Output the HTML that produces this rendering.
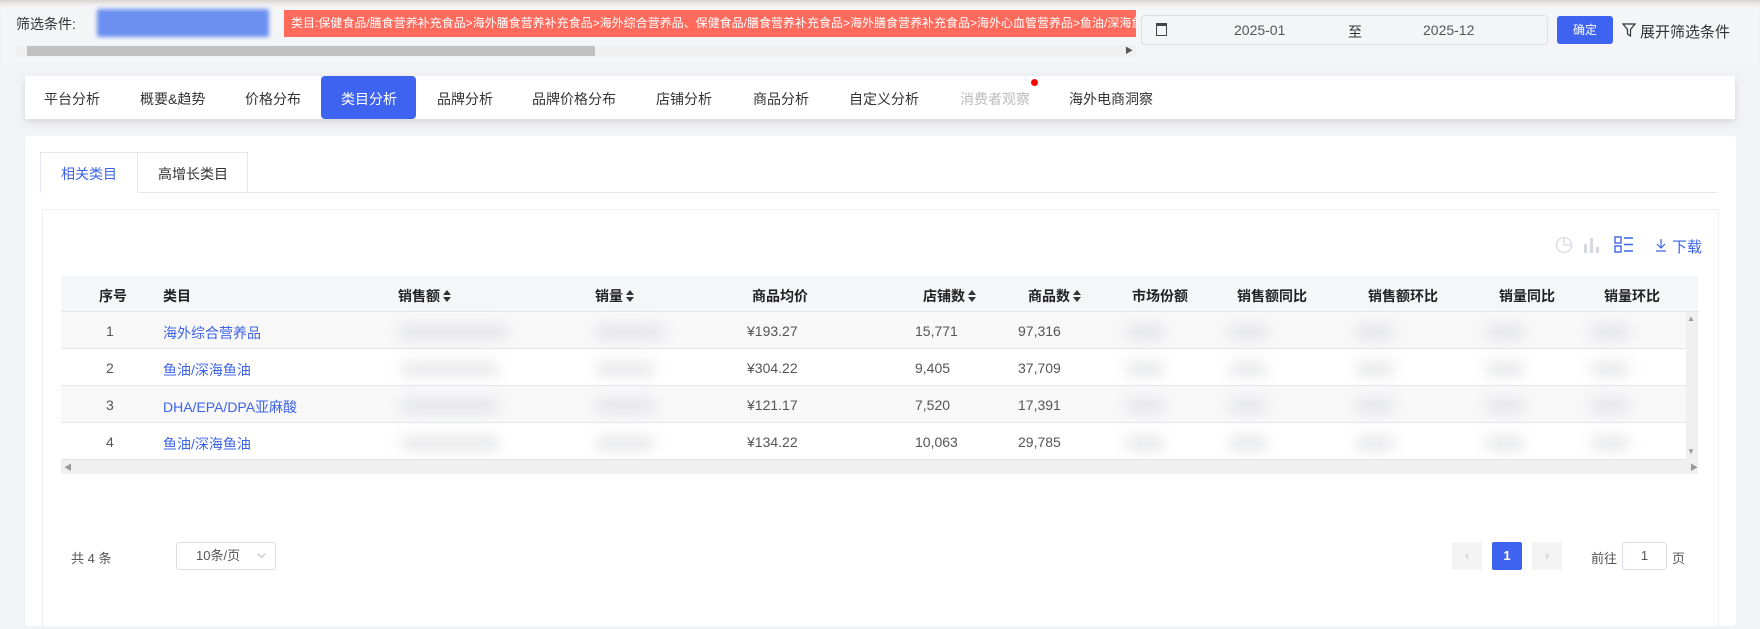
<!DOCTYPE html>
<html><head><meta charset="utf-8"><style>
*{box-sizing:border-box;margin:0;padding:0}
body{width:1760px;height:613px;overflow:hidden;background:#f2f3f6;font-family:"Liberation Sans","Noto Sans CJK SC",sans-serif;font-size:14px;color:#333;position:relative}
.a{position:absolute;white-space:nowrap}
.top{left:0;top:0;width:1760px;height:64px;background:#f4f5f7;box-shadow:inset 0 6px 6px -4px rgba(150,120,100,.35)}
.nav{left:25px;top:76px;width:1710px;height:43px;background:#fff;box-shadow:0 3px 8px rgba(0,0,0,.12)}
.nav span{position:absolute;top:13px;font-size:14px;color:#333}
.card{left:25px;top:136px;width:1711px;height:490px;background:#fff;border-radius:3px}
.th{top:286px;font-weight:bold;font-size:14px;color:#222}
.row{left:61px;width:1625px;height:37px;border-bottom:1px solid #e4e5e8}
.td{font-size:14px;color:#555}
.lk{color:#3d63e8}
.blur{position:absolute;height:14px;background:#d6d7da;filter:blur(7px);border-radius:7px;opacity:.6}
.sort{display:inline-block;position:relative;width:9px;height:14px;vertical-align:-2px;margin-left:2px}
.sort:before{content:"";position:absolute;left:1px;top:1px;border:4px solid transparent;border-bottom:5px solid #333;border-top:0}
.sort:after{content:"";position:absolute;left:1px;top:8px;border:4px solid transparent;border-top:5px solid #333;border-bottom:0}
</style></head><body>
<div class="a top"></div>
<div class="a" style="left:16px;top:14px;font-size:14px;color:#333">筛选条件:</div>
<div class="a" style="left:97px;top:9px;width:172px;height:28px;background:#6a8ff0;filter:blur(2px);border-radius:2px"></div>
<div class="a" style="left:284px;top:10px;width:852px;height:27px;background:#ff6a5c;color:#fff;font-size:12px;line-height:27px;padding-left:7px;overflow:hidden">类目:保健食品/膳食营养补充食品&gt;海外膳食营养补充食品&gt;海外综合营养品、保健食品/膳食营养补充食品&gt;海外膳食营养补充食品&gt;海外心血管营养品&gt;鱼油/深海鱼油</div>
<div class="a" style="left:16px;top:45px;width:1120px;height:12px;background:#f0f0f0"></div>
<div class="a" style="left:27px;top:46px;width:568px;height:10px;background:#c1c1c1"></div>
<div class="a" style="left:1125px;top:45px;font-size:8px;color:#555">▶</div>
<div class="a" style="left:1141px;top:15px;width:407px;height:30px;border:1px solid #dcdfe6;border-radius:4px;background:#f4f5f7"></div>
<div class="a" style="left:1156px;top:23px;width:11px;height:13px;border:1.5px solid #444;border-top-width:3px"></div>
<div class="a" style="left:1234px;top:22px;color:#555;font-size:14px">2025-01</div>
<div class="a" style="left:1348px;top:22px;color:#333;font-size:14px">至</div>
<div class="a" style="left:1423px;top:22px;color:#555;font-size:14px">2025-12</div>
<div class="a" style="left:1557px;top:16px;width:56px;height:28px;background:#3d63f0;border-radius:3px;color:#fff;font-size:12px;line-height:28px;text-align:center">确定</div>
<svg class="a" style="left:1622px;top:23px" width="14" height="14" viewBox="0 0 14 14"><path d="M1 1h12L8.5 6.5V13L5.5 11V6.5Z" fill="none" stroke="#333" stroke-width="1.2"/></svg>
<div class="a" style="left:1640px;top:21px;font-size:15px;color:#333">展开筛选条件</div>

<div class="a nav">
<span style="left:19px">平台分析</span><span style="left:115px">概要&amp;趋势</span><span style="left:220px">价格分布</span>
<div style="position:absolute;left:296px;top:0;width:95px;height:43px;background:#3d63f0;border-radius:4px"></div>
<span style="left:316px;color:#fff">类目分析</span><span style="left:412px">品牌分析</span><span style="left:507px">品牌价格分布</span>
<span style="left:631px">店铺分析</span><span style="left:728px">商品分析</span><span style="left:824px">自定义分析</span>
<span style="left:935px;color:#bbb">消费者观察</span><div style="position:absolute;left:1006px;top:3px;width:7px;height:7px;border-radius:50%;background:#f00"></div>
<span style="left:1044px">海外电商洞察</span>
</div>

<div class="a card"></div>
<div class="a" style="left:40px;top:152px;width:98px;height:41px;border:1px solid #e4e7ed;border-bottom:1px solid #fff;background:#fff;z-index:2"></div>
<div class="a" style="left:137px;top:152px;width:111px;height:40px;border:1px solid #e4e7ed;border-bottom:none"></div>
<div class="a" style="left:40px;top:192px;width:1677px;height:1px;background:#e4e7ed"></div>
<div class="a" style="left:61px;top:164px;color:#3d63e8;z-index:3">相关类目</div>
<div class="a" style="left:158px;top:164px;color:#333">高增长类目</div>
<div class="a" style="left:42px;top:209px;width:1677px;height:420px;border:1px solid #eef0f3"></div>

<svg class="a" style="left:1555px;top:236px" width="18" height="18" viewBox="0 0 18 18"><circle cx="9" cy="9" r="7.5" fill="none" stroke="#dde0e6" stroke-width="1.6"/><path d="M9 1.5V9H16.5" fill="none" stroke="#dde0e6" stroke-width="1.6"/></svg>
<svg class="a" style="left:1583px;top:236px" width="18" height="18" viewBox="0 0 18 18"><rect x="1" y="8" width="3" height="9" fill="#d5d8de"/><rect x="7" y="2" width="3" height="15" fill="#d5d8de"/><rect x="13" y="11" width="3" height="6" fill="#d5d8de"/></svg>
<svg class="a" style="left:1614px;top:236px" width="20" height="18" viewBox="0 0 20 18"><rect x="1" y="1" width="6" height="6" fill="none" stroke="#3d63e8" stroke-width="1.4"/><rect x="1" y="10" width="6" height="6" fill="none" stroke="#3d63e8" stroke-width="1.4"/><path d="M10 2h9M10 8.5h9M10 15h9" stroke="#3d63e8" stroke-width="1.4"/></svg>
<svg class="a" style="left:1655px;top:238px" width="12" height="14" viewBox="0 0 12 14"><path d="M6 1v9M2 6l4 4 4-4M1 13h10" fill="none" stroke="#3d63e8" stroke-width="1.2"/></svg>
<div class="a" style="left:1672px;top:236px;color:#3d63e8;font-size:15px">下载</div>

<div class="a" style="left:61px;top:276px;width:1637px;height:36px;background:#f5f6f8;border-bottom:1px solid #e4e5e8"></div>
<div class="a th" style="left:99px">序号</div>
<div class="a th" style="left:163px">类目</div>
<div class="a th" style="left:398px">销售额<span class="sort"></span></div>
<div class="a th" style="left:595px">销量<span class="sort"></span></div>
<div class="a th" style="left:752px">商品均价</div>
<div class="a th" style="left:923px">店铺数<span class="sort"></span></div>
<div class="a th" style="left:1028px">商品数<span class="sort"></span></div>
<div class="a th" style="left:1132px">市场份额</div>
<div class="a th" style="left:1237px">销售额同比</div>
<div class="a th" style="left:1368px">销售额环比</div>
<div class="a th" style="left:1499px">销量同比</div>
<div class="a th" style="left:1604px">销量环比</div>

<div class="a row" style="top:312px;background:#f8f8f9"></div>
<div class="a row" style="top:349px"></div>
<div class="a row" style="top:386px;background:#f8f8f9"></div>
<div class="a row" style="top:423px"></div>
<div class="a" style="left:1686px;top:312px;width:12px;height:148px;background:#f0f0f0"></div>
<div class="a" style="left:1687px;top:314px;font-size:8px;color:#999">▲</div>
<div class="a" style="left:1687px;top:447px;font-size:8px;color:#999">▼</div>
<div class="a" style="left:61px;top:460px;width:1637px;height:14px;background:#f0f0f0"></div>
<div class="a" style="left:64px;top:462px;font-size:8px;color:#999">◀</div>
<div class="a" style="left:1690px;top:462px;font-size:8px;color:#999">▶</div>

<div class="a td" style="left:106px;top:323px">1</div><div class="a td lk" style="left:163px;top:323px">海外综合营养品</div><div class="a td" style="left:747px;top:323px">¥193.27</div><div class="a td" style="left:915px;top:323px">15,771</div><div class="a td" style="left:1018px;top:323px">97,316</div>
<div class="a td" style="left:106px;top:360px">2</div><div class="a td lk" style="left:163px;top:360px">鱼油/深海鱼油</div><div class="a td" style="left:747px;top:360px">¥304.22</div><div class="a td" style="left:915px;top:360px">9,405</div><div class="a td" style="left:1018px;top:360px">37,709</div>
<div class="a td" style="left:106px;top:397px">3</div><div class="a td lk" style="left:163px;top:397px">DHA/EPA/DPA亚麻酸</div><div class="a td" style="left:747px;top:397px">¥121.17</div><div class="a td" style="left:915px;top:397px">7,520</div><div class="a td" style="left:1018px;top:397px">17,391</div>
<div class="a td" style="left:106px;top:434px">4</div><div class="a td lk" style="left:163px;top:434px">鱼油/深海鱼油</div><div class="a td" style="left:747px;top:434px">¥134.22</div><div class="a td" style="left:915px;top:434px">10,063</div><div class="a td" style="left:1018px;top:434px">29,785</div>

<div class="blur" style="left:398px;top:325px;width:110px"></div><div class="blur" style="left:595px;top:325px;width:70px"></div>
<div class="blur" style="left:400px;top:362px;width:100px"></div><div class="blur" style="left:595px;top:362px;width:60px"></div>
<div class="blur" style="left:400px;top:399px;width:100px"></div><div class="blur" style="left:595px;top:399px;width:60px"></div>
<div class="blur" style="left:400px;top:436px;width:100px"></div><div class="blur" style="left:595px;top:436px;width:60px"></div>
<div class="blur" style="left:1125px;top:325px;width:40px"></div><div class="blur" style="left:1228px;top:325px;width:40px"></div><div class="blur" style="left:1355px;top:325px;width:40px"></div><div class="blur" style="left:1485px;top:325px;width:40px"></div><div class="blur" style="left:1590px;top:325px;width:40px"></div>
<div class="blur" style="left:1125px;top:362px;width:40px"></div><div class="blur" style="left:1228px;top:362px;width:40px"></div><div class="blur" style="left:1355px;top:362px;width:40px"></div><div class="blur" style="left:1485px;top:362px;width:40px"></div><div class="blur" style="left:1590px;top:362px;width:40px"></div>
<div class="blur" style="left:1125px;top:399px;width:40px"></div><div class="blur" style="left:1228px;top:399px;width:40px"></div><div class="blur" style="left:1355px;top:399px;width:40px"></div><div class="blur" style="left:1485px;top:399px;width:40px"></div><div class="blur" style="left:1590px;top:399px;width:40px"></div>
<div class="blur" style="left:1125px;top:436px;width:40px"></div><div class="blur" style="left:1228px;top:436px;width:40px"></div><div class="blur" style="left:1355px;top:436px;width:40px"></div><div class="blur" style="left:1485px;top:436px;width:40px"></div><div class="blur" style="left:1590px;top:436px;width:40px"></div>

<div class="a" style="left:71px;top:548px;color:#555;font-size:13px">共 4 条</div>
<div class="a" style="left:176px;top:542px;width:100px;height:28px;border:1px solid #dcdfe6;border-radius:3px;font-size:13px;color:#555;line-height:26px;padding-left:19px">10条/页<svg style="position:absolute;left:80px;top:10px" width="9" height="6" viewBox="0 0 9 6"><path d="M0.5 0.5L4.5 4.5L8.5 0.5" fill="none" stroke="#bbb"/></svg></div>
<div class="a" style="left:1452px;top:542px;width:30px;height:28px;background:#f4f4f5;border-radius:2px;color:#c0c4cc;text-align:center;line-height:28px;font-size:13px">‹</div>
<div class="a" style="left:1492px;top:542px;width:30px;height:28px;background:#3d63f0;border-radius:2px;color:#fff;text-align:center;line-height:28px;font-size:13px;font-weight:bold">1</div>
<div class="a" style="left:1532px;top:542px;width:30px;height:28px;background:#f4f4f5;border-radius:2px;color:#c0c4cc;text-align:center;line-height:28px;font-size:13px">›</div>
<div class="a" style="left:1591px;top:548px;color:#555;font-size:13px">前往</div>
<div class="a" style="left:1622px;top:542px;width:45px;height:28px;border:1px solid #dcdfe6;border-radius:3px;text-align:center;line-height:26px;font-size:13px;color:#555">1</div>
<div class="a" style="left:1672px;top:548px;color:#555;font-size:13px">页</div>
</body></html>
